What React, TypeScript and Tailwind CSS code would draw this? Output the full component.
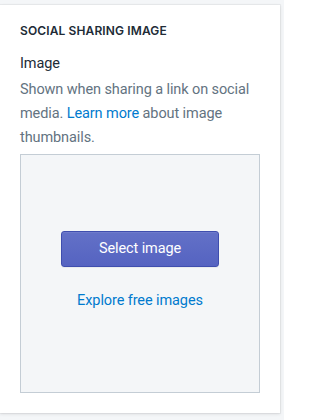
export default function App() {
  return (
    <div
      className="w-[284px] h-[420px] bg-[#f4f6f8] pt-[5px] pr-[4px] overflow-hidden"
      style={{ fontFamily: 'Roboto, "Noto Sans", sans-serif' }}
    >
      <div className="bg-white shadow-[0_0_0_1px_rgba(63,63,68,0.05),0_1px_3px_0_rgba(63,63,68,0.15)] px-5 pt-[18px] pb-5">
        <h2
          className="text-[12px] leading-[16px] font-semibold uppercase text-[#212b36] tracking-[0.01em]"
          style={{ fontFamily: 'Inter, sans-serif' }}
        >
          Social sharing image
        </h2>
        <div className="mt-[13px] text-[14.5px] tracking-[-0.1px] leading-[24px] text-[#212b36]">Image</div>
        <p className="mt-[2px] text-[14.5px] tracking-[-0.1px] leading-[24px] text-[#637381]">
          Shown when sharing a link on social media.{' '}
          <a className="text-[#007ace]">Learn more</a> about image thumbnails.
        </p>
        <div className="mt-[4px] h-[239px] border border-[#c4cdd5] bg-[#f4f6f8] flex flex-col items-center pt-[76px]">
          <button className="w-[158px] h-[36px] rounded-[3px] border border-[#3f4eae] bg-gradient-to-b from-[#6371c7] to-[#5563c1] text-white text-[14.5px] tracking-[-0.1px] shadow-[inset_0_1px_0_0_#6f7bcb,0_1px_0_0_rgba(22,29,37,0.05)]">
            Select image
          </button>
          <a className="mt-[24px] text-[14.5px] tracking-[-0.1px] leading-[20px] text-[#007ace]">Explore free images</a>
        </div>
      </div>
    </div>
  );
}
